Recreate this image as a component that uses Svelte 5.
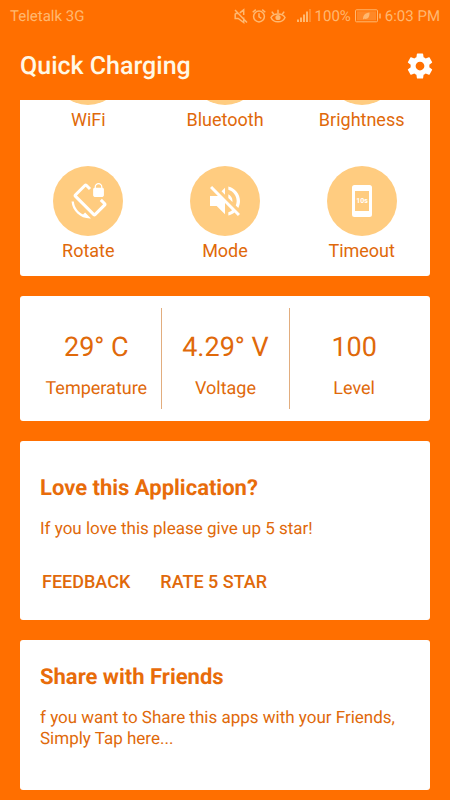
<script>
    const toggles = [
        { key: "wifi", label: "WiFi" },
        { key: "bluetooth", label: "Bluetooth" },
        { key: "brightness", label: "Brightness" },
        { key: "rotate", label: "Rotate" },
        { key: "mode", label: "Mode" },
        { key: "timeout", label: "Timeout" }
    ];

    const stats = [
        { value: "29° C", label: "Temperature" },
        { value: "4.29° V", label: "Voltage" },
        { value: "100", label: "Level" }
    ];
</script>

<div class="screen">
    <div class="statusbar">
        <span class="carrier">Teletalk 3G</span>
        <div class="notices">
            <svg width="14" height="16" viewBox="0 0 14 16" fill="none" stroke="currentColor" stroke-width="1.5">
                <path d="M1.2 5.5v5h3l5.5 4V9.500M9.700 7V1.800L5.800 4.800M1.200 5.500h2.800M1 2l12 12.500" />
            </svg>
            <svg width="14" height="16" viewBox="0 0 14 16" fill="none" stroke="currentColor" stroke-width="1.5">
                <circle cx="7" cy="8.5" r="5.4" />
                <path d="M7 5.200v3.600l2.400 1.600M.7 4.300L3.800 1.600M13.300 4.300L10.200 1.600" />
            </svg>
            <svg width="16" height="16" viewBox="0 0 16 16" fill="none" stroke="currentColor" stroke-width="1.5">
                <path d="M1 9.500C3.500 4.900 12.500 4.900 15 9.500C12.500 15.300 3.500 15.300 1 9.500z" />
                <path d="M8 5.500V1.800M3.800 6.300L1.800 3.600M12.200 6.300l2-2.700" />
                <circle cx="8" cy="9.500" r="2.600" fill="currentColor" stroke="none" />
            </svg>
        </div>
        <svg width="14" height="14" viewBox="0 0 14 14" fill="currentColor">
            <path d="M0 10.500h2V13H0zM3 8.500h2V13H3zM6 5.500h2V13H6zM9 2.500h2V13H9z" />
            <path d="M12 0h2v13h-2z" opacity=".4" />
        </svg>
        <span class="percent">100%</span>
        <svg width="26" height="14" viewBox="0 0 26 14" fill="none" stroke="currentColor">
            <rect x=".5" y=".8" width="22" height="12" rx="1" />
            <rect x="2" y="2.300" width="19" height="9" fill="currentColor" stroke="none" opacity=".35" />
            <path d="M8 10.500C8 6 10 4 14.500 3.500C14.700 8 13 10.500 9.300 9.800z" fill="currentColor" stroke="none" />
            <path d="M25 4.500v5" stroke-width="1.500" />
        </svg>
        <span class="time">6:03 PM</span>
    </div>

    <header>
        <h1>Quick Charging</h1>
        <button class="settings" aria-label="Settings">
            <svg width="30" height="30" viewBox="0 0 24 24" fill="currentColor">
                <path d="M19.430 12.980c.04-.32.070-.64.070-.98s-.03-.66-.07-.98l2.110-1.650c.19-.15.240-.42.120-.64l-2-3.460c-.12-.22-.39-.3-.61-.22l-2.490 1c-.52-.4-1.080-.73-1.690-.98l-.38-2.650C14.460 2.180 14.250 2 14 2h-4c-.25 0-.46.18-.49.42l-.38 2.650c-.61.25-1.170.59-1.690.98l-2.490-1c-.23-.09-.49 0-.61.22l-2 3.460c-.13.22-.07.49.12.64l2.110 1.650c-.04.32-.07.65-.07.98s.03.66.07.98l-2.110 1.650c-.19.15-.24.42-.12.64l2 3.460c.12.22.39.3.61.22l2.490-1c.52.4 1.080.73 1.690.98l.38 2.650c.03.24.24.42.49.42h4c.25 0 .46-.18.49-.42l.38-2.650c.61-.25 1.170-.59 1.690-.98l2.490 1c.23.09.49 0 .61-.22l2-3.460c.12-.22.07-.49-.12-.64l-2.110-1.650zM12 15.500c-1.930 0-3.500-1.570-3.500-3.500s1.570-3.500 3.500-3.500 3.500 1.570 3.500 3.500-1.570 3.500-3.500 3.500z" />
            </svg>
        </button>
    </header>

    <main>
        <section class="card toggles">
            {#each toggles as toggle (toggle.key)}
                <button class="toggle">
                    <span class="circle">
                        {#if toggle.key === "rotate"}
                            <svg width="37" height="37" viewBox="0 0 24 24" fill="currentColor">
                                <path d="M23.250 12.770l-2.570-2.570-1.410 1.410 2.220 2.220-5.660 5.660L4.510 8.170l5.660-5.660 2.100 2.100 1.410-1.410L11.230.75c-.59-.59-1.540-.59-2.120 0L2.750 7.110c-.59.59-.59 1.540 0 2.120l12.020 12.020c.59.59 1.540.59 2.120 0l6.360-6.360c.59-.59.59-1.540 0-2.120zM8.470 20.480C5.200 18.940 2.860 15.760 2.500 12H1c.51 6.160 5.660 11 11.950 11l.66-.03-3.810-3.820-1.330 1.330zM16 9h5c.55 0 1-.45 1-1V4c0-.55-.45-1-1-1v-.5C21 1.120 19.880 0 18.500 0S16 1.120 16 2.500V3c-.55 0-1 .45-1 1v4c0 .55.45 1 1 1zm.8-6.500c0-.94.76-1.700 1.700-1.700s1.700.76 1.700 1.700V3h-3.400v-.5z" />
                            </svg>
                        {:else if toggle.key === "mode"}
                            <svg width="40" height="40" viewBox="0 0 24 24" fill="currentColor">
                                <path d="M16.500 12c0-1.770-1.020-3.290-2.500-4.030v2.210l2.450 2.450c.03-.2.050-.41.050-.63zm2.500 0c0 .94-.2 1.820-.54 2.640l1.510 1.510C20.630 14.910 21 13.500 21 12c0-4.280-2.990-7.860-7-8.770v2.060c2.890.86 5 3.540 5 6.710zM4.270 3L3 4.270 7.730 9H3v6h4l5 5v-6.730l4.250 4.250c-.67.52-1.420.93-2.250 1.180v2.060c1.380-.31 2.630-.95 3.690-1.810L19.730 21 21 19.730l-9-9L4.270 3zM12 4L9.910 6.090 12 8.180V4z" />
                            </svg>
                        {:else if toggle.key === "timeout"}
                            <svg width="20" height="32" viewBox="0 0 20 32" fill="currentColor">
                                <path fill-rule="evenodd" d="M2.500 0h15A2.500 2.500 0 0 1 20 2.500v27a2.500 2.500 0 0 1-2.500 2.500h-15A2.500 2.500 0 0 1 0 29.500v-27A2.500 2.500 0 0 1 2.500 0zM3 6v20h14V6z" />
                                <text x="10" y="18" text-anchor="middle">10s</text>
                            </svg>
                        {/if}
                    </span>
                    <span class="label">{toggle.label}</span>
                </button>
            {/each}
        </section>

        <section class="card stats">
            {#each stats as stat (stat.label)}
                <div class="stat">
                    <span class="value">{stat.value}</span>
                    <span class="label">{stat.label}</span>
                </div>
            {/each}
        </section>

        <section class="card love">
            <h2>Love this Application?</h2>
            <p>If you love this please give up 5 star!</p>
            <div class="actions">
                <button>FEEDBACK</button>
                <button>RATE 5 STAR</button>
            </div>
        </section>

        <section class="card share">
            <h2>Share with Friends</h2>
            <p>f you want to Share this apps with your Friends, Simply Tap here...</p>
        </section>
    </main>
</div>

<style>
    :global(body) {
        background: #ff6f00;
    }

    .screen {
        font-family: Roboto, "Liberation Sans", sans-serif;
        font-size: 18px;
        line-height: 20px;
        text-rendering: geometricPrecision;
        color: #e0690a;
    }

    button {
        border: none;
        background: none;
        padding: 0;
        font: inherit;
        color: inherit;
        cursor: pointer;
    }

    svg {
        display: block;
        flex: none;
    }

    .statusbar {
        display: flex;
        align-items: center;
        gap: 4px;
        height: 32px;
        padding: 0 10px;
        font-size: 15px;
        color: #ffb870;
    }

    .carrier {
        flex: 1;
    }

    .notices {
        display: flex;
        gap: 4px;
        margin-right: 7px;
    }

    header {
        display: flex;
        align-items: center;
        justify-content: space-between;
        height: 68px;
        padding: 0 15px 0 20px;
        color: #fff8e6;
    }

    h1 {
        margin: 0;
        padding-top: 2px;
        font-size: 25px;
        font-weight: 500;
    }

    .settings {
        color: #fff;
    }

    main {
        display: flex;
        flex-direction: column;
        gap: 20px;
        padding: 0 20px 10px;
        overflow: hidden;
    }

    .card {
        background: #fff;
        border-radius: 3px;
    }

    /* scrolled up under the header */
    .toggles {
        display: grid;
        grid-template-columns: repeat(3, 1fr);
        row-gap: 36px;
        margin-top: -86px;
        padding: 21px 0 15px;
    }

    .toggle {
        display: flex;
        flex-direction: column;
        align-items: center;
        gap: 5px;
    }

    .circle {
        display: flex;
        align-items: center;
        justify-content: center;
        width: 70px;
        height: 70px;
        border-radius: 50%;
        background: #ffcc80;
        color: #fff;
    }

    .circle text {
        font-size: 7px;
        font-weight: 700;
    }

    .stats {
        display: grid;
        grid-template-columns: repeat(3, 1fr);
        padding: 12px;
    }

    .stat {
        display: flex;
        flex-direction: column;
        align-items: center;
        gap: 18px;
        padding: 25px 0 10px;
    }

    .stat + .stat {
        border-left: 1px solid #e2ad7e;
    }

    .value {
        font-size: 27px;
        line-height: 28px;
    }

    .love {
        padding: 34px 20px 28px;
    }

    .share {
        padding: 24px 20px 40px;
    }

    h2 {
        margin: 0 0 16px;
        font-size: 22px;
        line-height: 28px;
        font-weight: 700;
        color: #e86c0a;
    }

    p {
        margin: 0;
        font-size: 17px;
        line-height: 21px;
    }

    .actions {
        display: flex;
        gap: 30px;
        margin-top: 32px;
        padding: 0 2px;
    }

    .actions button {
        font-weight: 500;
    }
</style>
